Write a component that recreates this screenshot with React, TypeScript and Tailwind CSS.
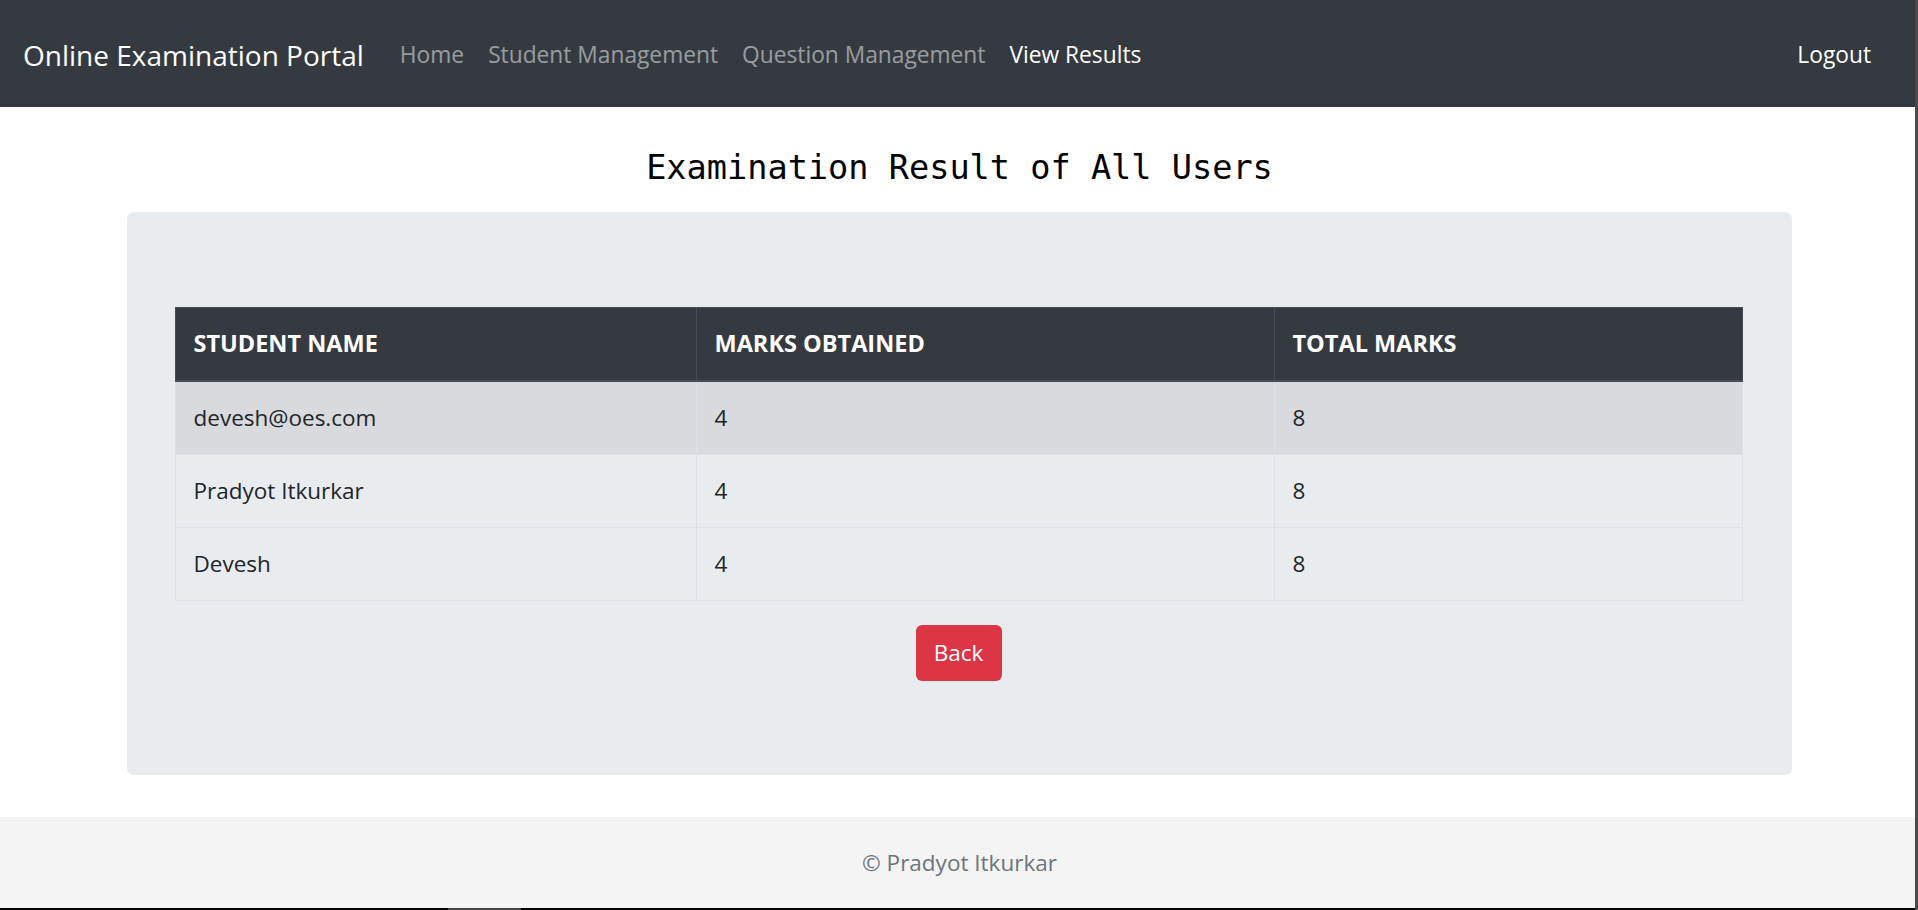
import React from "react";

const results = [
  { name: "devesh@oes.com", marks: 4, total: 8 },
  { name: "Pradyot Itkurkar", marks: 4, total: 8 },
  { name: "Devesh", marks: 4, total: 8 },
];

const Navbar = () => {
  return (
    <nav className="h-[107px] shrink-0 bg-[#343a40] flex items-center pl-[23px] pr-[32px] pt-[3px]">
      <a href="#" className="text-[28px] text-white mr-[24px] -mt-[1px]">
        Online Examination Portal
      </a>
      <ul className="flex items-center text-[22.75px]">
        <li><a href="#" className="px-[12px] text-white/50">Home</a></li>
        <li><a href="#" className="px-[12px] text-white/50">Student Management</a></li>
        <li><a href="#" className="px-[12px] text-white/50">Question Management</a></li>
        <li><a href="#" className="px-[12px] text-white">View Results</a></li>
      </ul>
      <a href="#" className="ml-auto px-[12px] text-[22.75px] text-white">
        Logout
      </a>
    </nav>
  );
};

const ResultTable = () => {
  return (
    <div className="w-[1568px]">
      <div className="grid grid-cols-[522px_578px_468px] bg-[#343a40] text-white font-bold text-[23.5px]">
        <div className="h-[75px] flex items-center px-[18px] border-t border-l border-r border-b-2 border-[#454d55]">STUDENT NAME</div>
        <div className="h-[75px] flex items-center px-[18px] border-t border-r border-b-2 border-[#454d55]">MARKS OBTAINED</div>
        <div className="h-[75px] flex items-center px-[18px] border-t border-r border-b-2 border-[#454d55]">TOTAL MARKS</div>
      </div>
      {results.map((r, i) => (
        <div
          key={i}
          className={
            "grid grid-cols-[522px_578px_468px] text-[22.5px] text-[#212529] " +
            (i === 0 ? "bg-[#d8dadd]" : "")
          }
        >
          <div className="h-[73px] flex items-center px-[18px] border-l border-r border-b border-[#dee2e6]">{r.name}</div>
          <div className="h-[73px] flex items-center px-[18px] border-r border-b border-[#dee2e6]">{r.marks}</div>
          <div className="h-[73px] flex items-center px-[18px] border-r border-b border-[#dee2e6]">{r.total}</div>
        </div>
      ))}
    </div>
  );
};

export default function App() {
  return (
    <div className="w-[1918px] h-[910px] flex flex-col bg-white border-r-[3px] border-[#4a4a4a] font-['Open_Sans',sans-serif] overflow-hidden">
      <Navbar />

      <main className="flex-1 flex flex-col items-center pl-[4px]">
        <h3 className="pt-[41px] mb-[25px] leading-[39px] text-[33.6px] text-black font-['DejaVu_Sans_Mono',monospace] font-normal">
          Examination Result of All Users
        </h3>

        <div className="w-[1665px] h-[563px] bg-[#e9ecef] rounded-[7px] pt-[95px] pl-[47px] pr-[49px] flex flex-col items-center">
          <ResultTable />
          <button className="mt-[24px] w-[86px] h-[56px] rounded-[6px] bg-[#dc3545] text-white text-[22.5px] flex items-center justify-center">
            Back
          </button>
        </div>
      </main>

      <footer className="h-[91px] shrink-0 bg-[#f4f4f4] flex items-center justify-center pl-[4px] text-[22.5px] text-[#6c757d]">
        © Pradyot Itkurkar
      </footer>
      <div className="h-[2px] shrink-0 bg-black flex">
        <div className="ml-[448px] w-[73px] bg-[#444]" />
      </div>
    </div>
  );
}
